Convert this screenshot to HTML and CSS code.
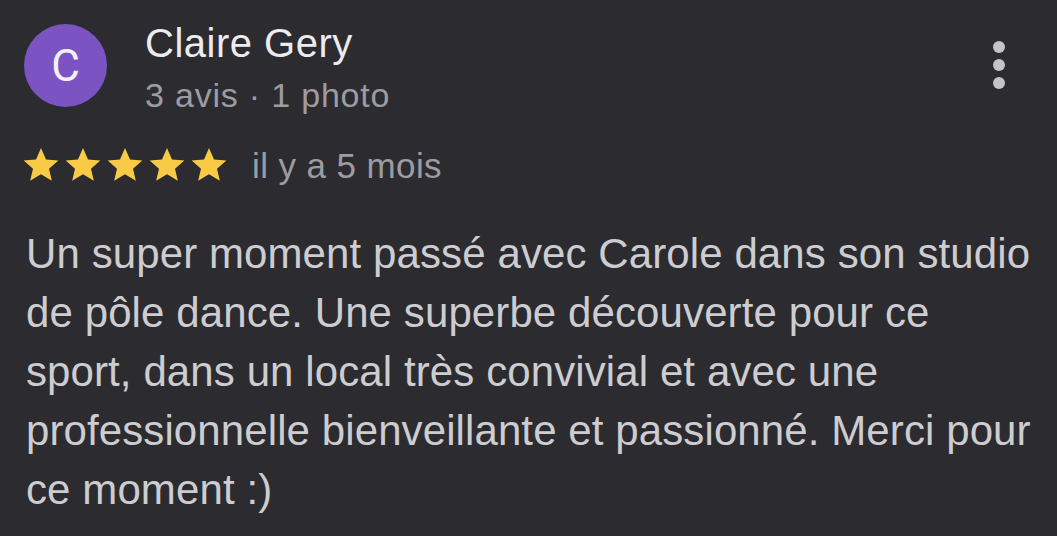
FILE: index.html
```html
<!DOCTYPE html>
<html lang="fr">
<head>
<meta charset="utf-8">
<link rel="stylesheet" href="styles.css">
</head>
<body>
<div class="review">
  <div class="header">
    <div class="avatar">C</div>
    <div class="who">
      <div class="name">Claire Gery</div>
      <div class="meta">3 avis · 1 photo</div>
    </div>
    <div class="more"><span></span><span></span><span></span></div>
  </div>
  <div class="rating">
    <div class="stars">
      <svg viewBox="0 0 24 24"><path d="M12 1.8l3 6.9 7.4.6-5.6 4.9 1.7 7.3L12 17.6l-6.5 3.9 1.7-7.3L1.6 9.3 9 8.7z"/></svg>
      <svg viewBox="0 0 24 24"><path d="M12 1.8l3 6.9 7.4.6-5.6 4.9 1.7 7.3L12 17.6l-6.5 3.9 1.7-7.3L1.6 9.3 9 8.7z"/></svg>
      <svg viewBox="0 0 24 24"><path d="M12 1.8l3 6.9 7.4.6-5.6 4.9 1.7 7.3L12 17.6l-6.5 3.9 1.7-7.3L1.6 9.3 9 8.7z"/></svg>
      <svg viewBox="0 0 24 24"><path d="M12 1.8l3 6.9 7.4.6-5.6 4.9 1.7 7.3L12 17.6l-6.5 3.9 1.7-7.3L1.6 9.3 9 8.7z"/></svg>
      <svg viewBox="0 0 24 24"><path d="M12 1.8l3 6.9 7.4.6-5.6 4.9 1.7 7.3L12 17.6l-6.5 3.9 1.7-7.3L1.6 9.3 9 8.7z"/></svg>
    </div>
    <span class="when">il y a 5 mois</span>
  </div>
  <p class="text">Un super moment passé avec Carole dans son studio<br>de pôle dance. Une superbe découverte pour ce<br>sport, dans un local très convivial et avec une<br>professionnelle bienveillante et passionné. Merci pour<br>ce moment :)</p>
</div>
</body>
</html>
```

FILE: styles.css
```css
html, body {
  margin: 0;
  padding: 0;
  background: #2c2c30;
  width: 1057px;
  height: 536px;
  overflow: hidden;
}
body {
  font-family: "Liberation Sans", Arial, sans-serif;
}
.review {
  padding: 24px 0 0 24px;
}
.header {
  display: flex;
  align-items: flex-start;
}
.avatar {
  width: 83px;
  height: 83px;
  border-radius: 50%;
  background: #7b53c2;
  color: #f3f0f7;
  font-family: Roboto, "Liberation Sans", sans-serif;
  font-size: 44px;
  line-height: 1;
  display: flex;
  align-items: center;
  justify-content: center;
  flex: none;
}
.who {
  margin-left: 38px;
  flex: 1;
  margin-top: -5px;
}
.name {
  color: #ececee;
  font-size: 40px;
  letter-spacing: 0.5px;
  line-height: 48px;
}
.meta {
  color: #9c9ca2;
  font-size: 34px;
  letter-spacing: 0.8px;
  line-height: 57px;
}
.more {
  display: flex;
  flex-direction: column;
  gap: 6px;
  margin-top: 17px;
  margin-right: 52px;
}
.more span {
  width: 12px;
  height: 12px;
  border-radius: 50%;
  background: #c4c4c8;
}
.rating {
  display: flex;
  align-items: center;
  margin-top: 21px;
  height: 40px;
}
.stars {
  display: flex;
  gap: 2px;
  margin-left: -3px;
}
.stars svg {
  width: 40px;
  height: 40px;
  fill: #f8ca46;
}
.when {
  color: #9c9ca2;
  font-size: 35px;
  letter-spacing: 0.4px;
  line-height: 40px;
  margin-left: 23px;
  margin-top: 2px;
}
.text {
  margin: 39px 0 0 2px;
  color: #cdcdd1;
  font-size: 42px;
  letter-spacing: 0.1px;
  line-height: 59px;
  white-space: nowrap;
}
```
